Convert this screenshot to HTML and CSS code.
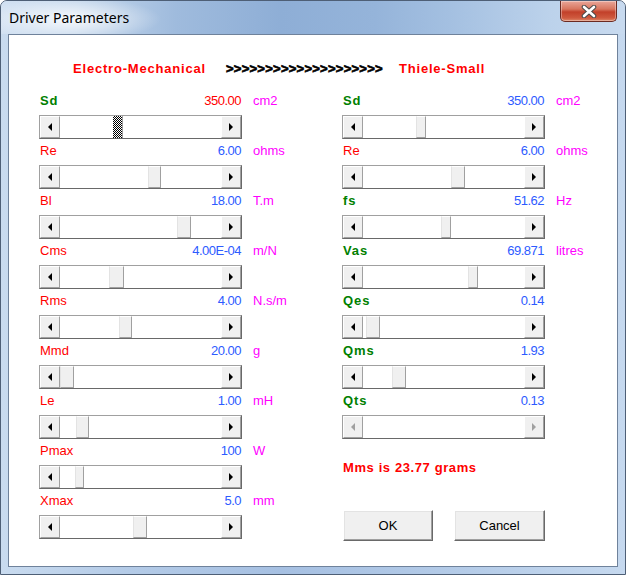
FILE: index.html
```html
<!DOCTYPE html>
<html>
<head>
<meta charset="utf-8">
<title>Driver Parameters</title>
<link rel="stylesheet" href="styles.css">
</head>
<body>
<div class="window">
  <div class="titlebar">
    <span class="title">Driver Parameters</span>
    <div class="close">
      <svg width="16" height="13" viewBox="0 0 16 13">
        <path d="M3 2 L13 11 M13 2 L3 11" stroke="#4a4a4a" stroke-width="4.6" stroke-linecap="round" fill="none"/>
        <path d="M3 2 L13 11 M13 2 L3 11" stroke="#ffffff" stroke-width="2.6" stroke-linecap="round" fill="none"/>
      </svg>
    </div>
  </div>
  <div class="client">
    <div class="header">
      <span class="hd hd-left">Electro-Mechanical</span>
      <span class="arrows">&gt;&gt;&gt;&gt;&gt;&gt;&gt;&gt;&gt;&gt;&gt;&gt;&gt;&gt;&gt;&gt;&gt;&gt;&gt;&gt;</span>
      <span class="hd">Thiele-Small</span>
    </div>
    <div class="cols">
      <div class="col">
        <div class="row">
          <div class="lbl"><span class="name strong">Sd</span><span class="val red">350.00</span><span class="unit">cm2</span></div>
          <div class="sb"><div class="btn"><svg width="4" height="8"><polygon points="4,0 4,8 0,4"/></svg></div><div class="track"><div class="thumb focus" style="left:53px;width:10px"></div></div><div class="btn"><svg width="4" height="8"><polygon points="0,0 0,8 4,4"/></svg></div></div>
        </div>
        <div class="row">
          <div class="lbl"><span class="name">Re</span><span class="val">6.00</span><span class="unit">ohms</span></div>
          <div class="sb"><div class="btn"><svg width="4" height="8"><polygon points="4,0 4,8 0,4"/></svg></div><div class="track"><div class="thumb" style="left:88px;width:13px"></div></div><div class="btn"><svg width="4" height="8"><polygon points="0,0 0,8 4,4"/></svg></div></div>
        </div>
        <div class="row">
          <div class="lbl"><span class="name">Bl</span><span class="val">18.00</span><span class="unit">T.m</span></div>
          <div class="sb"><div class="btn"><svg width="4" height="8"><polygon points="4,0 4,8 0,4"/></svg></div><div class="track"><div class="thumb" style="left:117px;width:14px"></div></div><div class="btn"><svg width="4" height="8"><polygon points="0,0 0,8 4,4"/></svg></div></div>
        </div>
        <div class="row">
          <div class="lbl"><span class="name">Cms</span><span class="val">4.00E-04</span><span class="unit">m/N</span></div>
          <div class="sb"><div class="btn"><svg width="4" height="8"><polygon points="4,0 4,8 0,4"/></svg></div><div class="track"><div class="thumb" style="left:49px;width:15px"></div></div><div class="btn"><svg width="4" height="8"><polygon points="0,0 0,8 4,4"/></svg></div></div>
        </div>
        <div class="row">
          <div class="lbl"><span class="name">Rms</span><span class="val">4.00</span><span class="unit">N.s/m</span></div>
          <div class="sb"><div class="btn"><svg width="4" height="8"><polygon points="4,0 4,8 0,4"/></svg></div><div class="track"><div class="thumb" style="left:59px;width:13px"></div></div><div class="btn"><svg width="4" height="8"><polygon points="0,0 0,8 4,4"/></svg></div></div>
        </div>
        <div class="row">
          <div class="lbl"><span class="name">Mmd</span><span class="val">20.00</span><span class="unit">g</span></div>
          <div class="sb"><div class="btn"><svg width="4" height="8"><polygon points="4,0 4,8 0,4"/></svg></div><div class="track"><div class="thumb" style="left:0px;width:14px"></div></div><div class="btn"><svg width="4" height="8"><polygon points="0,0 0,8 4,4"/></svg></div></div>
        </div>
        <div class="row">
          <div class="lbl"><span class="name">Le</span><span class="val">1.00</span><span class="unit">mH</span></div>
          <div class="sb"><div class="btn"><svg width="4" height="8"><polygon points="4,0 4,8 0,4"/></svg></div><div class="track"><div class="thumb" style="left:16px;width:13px"></div></div><div class="btn"><svg width="4" height="8"><polygon points="0,0 0,8 4,4"/></svg></div></div>
        </div>
        <div class="row">
          <div class="lbl"><span class="name">Pmax</span><span class="val">100</span><span class="unit">W</span></div>
          <div class="sb"><div class="btn"><svg width="4" height="8"><polygon points="4,0 4,8 0,4"/></svg></div><div class="track"><div class="thumb" style="left:15px;width:9px"></div></div><div class="btn"><svg width="4" height="8"><polygon points="0,0 0,8 4,4"/></svg></div></div>
        </div>
        <div class="row">
          <div class="lbl"><span class="name">Xmax</span><span class="val">5.0</span><span class="unit">mm</span></div>
          <div class="sb"><div class="btn"><svg width="4" height="8"><polygon points="4,0 4,8 0,4"/></svg></div><div class="track"><div class="thumb" style="left:73px;width:14px"></div></div><div class="btn"><svg width="4" height="8"><polygon points="0,0 0,8 4,4"/></svg></div></div>
        </div>
      </div>
      <div class="col">
        <div class="row">
          <div class="lbl"><span class="name strong">Sd</span><span class="val">350.00</span><span class="unit">cm2</span></div>
          <div class="sb"><div class="btn"><svg width="4" height="8"><polygon points="4,0 4,8 0,4"/></svg></div><div class="track"><div class="thumb" style="left:53px;width:10px"></div></div><div class="btn"><svg width="4" height="8"><polygon points="0,0 0,8 4,4"/></svg></div></div>
        </div>
        <div class="row">
          <div class="lbl"><span class="name">Re</span><span class="val">6.00</span><span class="unit">ohms</span></div>
          <div class="sb"><div class="btn"><svg width="4" height="8"><polygon points="4,0 4,8 0,4"/></svg></div><div class="track"><div class="thumb" style="left:88px;width:14px"></div></div><div class="btn"><svg width="4" height="8"><polygon points="0,0 0,8 4,4"/></svg></div></div>
        </div>
        <div class="row">
          <div class="lbl"><span class="name strong">fs</span><span class="val">51.62</span><span class="unit">Hz</span></div>
          <div class="sb"><div class="btn"><svg width="4" height="8"><polygon points="4,0 4,8 0,4"/></svg></div><div class="track"><div class="thumb" style="left:78px;width:10px"></div></div><div class="btn"><svg width="4" height="8"><polygon points="0,0 0,8 4,4"/></svg></div></div>
        </div>
        <div class="row">
          <div class="lbl"><span class="name strong">Vas</span><span class="val">69.871</span><span class="unit">litres</span></div>
          <div class="sb"><div class="btn"><svg width="4" height="8"><polygon points="4,0 4,8 0,4"/></svg></div><div class="track"><div class="thumb" style="left:105px;width:10px"></div></div><div class="btn"><svg width="4" height="8"><polygon points="0,0 0,8 4,4"/></svg></div></div>
        </div>
        <div class="row">
          <div class="lbl"><span class="name strong">Qes</span><span class="val">0.14</span><span class="unit"></span></div>
          <div class="sb"><div class="btn"><svg width="4" height="8"><polygon points="4,0 4,8 0,4"/></svg></div><div class="track"><div class="thumb" style="left:3px;width:14px"></div></div><div class="btn"><svg width="4" height="8"><polygon points="0,0 0,8 4,4"/></svg></div></div>
        </div>
        <div class="row">
          <div class="lbl"><span class="name strong">Qms</span><span class="val">1.93</span><span class="unit"></span></div>
          <div class="sb"><div class="btn"><svg width="4" height="8"><polygon points="4,0 4,8 0,4"/></svg></div><div class="track"><div class="thumb" style="left:29px;width:14px"></div></div><div class="btn"><svg width="4" height="8"><polygon points="0,0 0,8 4,4"/></svg></div></div>
        </div>
        <div class="row">
          <div class="lbl"><span class="name strong">Qts</span><span class="val">0.13</span><span class="unit"></span></div>
          <div class="sb disabled"><div class="btn"><svg width="4" height="8"><polygon points="4,0 4,8 0,4"/></svg></div><div class="track"></div><div class="btn"><svg width="4" height="8"><polygon points="0,0 0,8 4,4"/></svg></div></div>
        </div>
        <div class="mms">Mms is 23.77 grams</div>
        <div class="buttons">
          <div class="pbtn ok">OK</div>
          <div class="pbtn cancel">Cancel</div>
        </div>
      </div>
    </div>
  </div>
</div>
</body>
</html>
```

FILE: styles.css
```css
* { box-sizing: border-box; }

html, body {
  margin: 0;
  padding: 0;
}

body {
  width: 626px;
  height: 575px;
  overflow: hidden;
  font-family: "Liberation Sans", Arial, sans-serif;
  font-size: 13px;
  background: #ffffff;
}

.window {
  width: 626px;
  height: 575px;
  border: 1px solid #4e5f76;
  border-radius: 7px 7px 0 0;
  display: flex;
  flex-direction: column;
  background:
    linear-gradient(to right, #c9dbef 0%, #b4cbe7 20%, #a6c0e2 45%, #b5cce8 75%, #c6d9ef 100%);
}

.titlebar {
  height: 33px;
  display: flex;
  align-items: flex-start;
  border-radius: 6px 6px 0 0;
  background:
    radial-gradient(ellipse 90px 22px at 70px 18px, rgba(255,255,255,0.85), rgba(255,255,255,0) 100%),
    linear-gradient(to right, #d2e1f2 0%, #c4d7ec 12%, #9fbbdd 28%, #8eaed6 45%, #95b4da 60%, #a4c0e1 72%, #bcd2eb 88%, #c8daef 100%);
}

.title {
  font-family: "Noto Sans", "Open Sans", sans-serif;
  font-size: 14px;
  color: #000000;
  margin: 8px 0 0 8px;
  line-height: 18px;
}

.close {
  margin-left: auto;
  margin-right: 8px;
  width: 57px;
  height: 21px;
  border: 1px solid #6b2a22;
  border-top: none;
  border-radius: 0 0 5px 5px;
  background: linear-gradient(to bottom, #e9a699 0%, #d8765f 40%, #c2402a 55%, #cf5a3f 85%, #de8a6b 100%);
  box-shadow: inset 0 0 0 1px rgba(255,255,255,0.35);
  display: flex;
  align-items: center;
  justify-content: center;
}

.client {
  flex: 1;
  margin: 0 7px 7px 7px;
  background: #ffffff;
  border: 1px solid #6f829b;
  padding-top: 26px;
}

.header {
  display: flex;
  height: 16px;
  line-height: 16px;
  padding-left: 64px;
  font-weight: bold;
  color: #ff0000;
}

.hd {
  letter-spacing: 0.8px;
  white-space: nowrap;
}

.hd-left {
  width: 153px;
}

.arrows {
  width: 173px;
  color: #000000;
  letter-spacing: 0.25px;
  white-space: nowrap;
  -webkit-text-stroke: 0.7px #000000;
}

.cols {
  display: grid;
  grid-template-columns: 303px 1fr;
  padding-left: 30px;
  margin-top: 16px;
}

.row {
  height: 50px;
}

.lbl {
  display: flex;
  height: 16px;
  line-height: 16px;
  white-space: nowrap;
}

.name {
  width: 120px;
  color: #ff0000;
  padding-left: 1px;
}

.name.strong {
  color: #008000;
  font-weight: bold;
  letter-spacing: 0.9px;
}

.val {
  width: 82px;
  text-align: right;
  color: #2d5bff;
  letter-spacing: -0.5px;
}

.val.red {
  color: #ff0000;
}

.unit {
  margin-left: 12px;
  color: #ff00ff;
}

.sb {
  display: flex;
  width: 203px;
  height: 24px;
  margin-top: 6px;
  border: 1px solid;
  border-color: #a0a0a0 #696969 #696969 #a0a0a0;
  background: #ffffff;
}

.btn {
  width: 20px;
  height: 100%;
  background: #f0f0f0;
  border: 1px solid;
  border-color: #ffffff #a0a0a0 #a0a0a0 #ffffff;
  display: flex;
  align-items: center;
  justify-content: center;
}

.btn svg {
  display: block;
  fill: #000000;
}

.sb.disabled .btn svg {
  fill: #a0a0a0;
}

.track {
  flex: 1;
  position: relative;
  background: #ffffff;
}

.thumb {
  position: absolute;
  top: 0;
  bottom: 0;
  background: #f0f0f0;
  border: 1px solid;
  border-color: #ffffff #a0a0a0 #a0a0a0 #e3e3e3;
}

.thumb.focus {
  border: none;
  background: repeating-conic-gradient(#000000 0 25%, #ffffff 0 50%) 0 0 / 2px 2px;
  box-shadow: inset -1px 0 0 #a0a0a0;
}

.mms {
  margin-top: 17px;
  height: 16px;
  line-height: 16px;
  font-weight: bold;
  color: #ff0000;
  letter-spacing: 0.6px;
  padding-left: 1px;
}

.buttons {
  display: flex;
  gap: 21px;
  margin-top: 34px;
  padding-left: 1px;
}

.pbtn {
  height: 31px;
  width: 90px;
  background: #f0f0f0;
  border: 1px solid;
  border-color: #ffffff #696969 #696969 #ffffff;
  box-shadow: inset -1px -1px 0 #a0a0a0, inset 1px 1px 0 #e3e3e3;
  display: flex;
  align-items: center;
  justify-content: center;
  color: #000000;
}

.pbtn.cancel {
  width: 91px;
}
```
